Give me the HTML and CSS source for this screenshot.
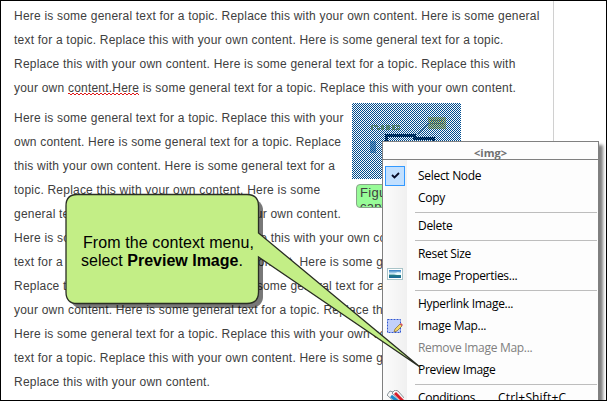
FILE: index.html
```
<!DOCTYPE html>
<html lang="en">
<head>
<meta charset="utf-8">
<title>Preview Image</title>
<link rel="stylesheet" href="styles.css">
</head>
<body>
<main class="frame">
  <article class="page">
    <p>Here is some general text for a topic. Replace this with your own content. Here is some general<br>
    text for a topic. Replace this with your own content. Here is some general text for a topic.<br>
    Replace this with your own content. Here is some general text for a topic. Replace this with<br>
    your own <span class="misspelled">content.Here</span> is some general text for a topic. Replace this with your own content.</p>
    <p>Here is some general text for a topic. Replace this with your<br>
    own content. Here is some general text for a topic. Replace<br>
    this with your own content. Here is some general text for a<br>
    topic. Replace this with your own content. Here is some<br>
    general text for a topic. Replace this with your own content.<br>
    Here is some general text for a topic. Replace this with your own content.<br>
    text for a topic. Replace this with your own content. Here is some general<br>
    Replace this with your own content. Here is some general text for a topic.<br>
    your own content. Here is some general text for a topic. Replace this with<br>
    Here is some general text for a topic. Replace this with your own content.<br>
    text for a topic. Replace this with your own content. Here is some general<br>
    Replace this with your own content.</p>
  </article>

  <figure class="figure">
    <svg class="picture" width="109" height="76" viewBox="0 0 109 76" shape-rendering="crispEdges">
      <rect width="109" height="76" fill="#f8fbfd"/>
      <path d="M19 22h2v5h-2zM22 22h4v2h-4zM25 25h3v2h-3zM29 22h3v5h-3zM34 22h4v5h-4zM40 22h3v5h-3zM44 22h4v2h-4zM44 25h4v2h-4z" fill="#a3b552"/>
      <path d="M76 14h18v12H76z" fill="#dcd36c"/>
      <path d="M78 17h13M78 20h13" stroke="#a49a40"/>
      <path d="M66 31L77 20" stroke="#7893a8" stroke-width="2" fill="none"/>
      <path d="M34 38V32H62V35H81V38" stroke="#001432" stroke-width="3" fill="none"/>
      <path d="M18 38h6v12h-6z" fill="#7ba6ce"/>
    </svg>
    <div class="selection"></div>
    <figcaption>Figure<br>caption</figcaption>
  </figure>

  <nav class="menu">
    <header>&lt;img&gt;</header>
    <ul>
      <li><span class="check"><svg width="18" height="18"><path d="M6 8l2.500 2.500L13 6" fill="none" stroke="#080c28" stroke-width="1.800"/></svg></span>Select Node</li>
      <li>Copy</li>
      <li class="rule"></li>
      <li>Delete</li>
      <li class="rule"></li>
      <li>Reset Size</li>
      <li><svg class="icon" width="17" height="16">
        <defs><linearGradient id="sky" x2="0" y2="1"><stop stop-color="#2878c0"/><stop offset=".5" stop-color="#dff5fb"/><stop offset=".65" stop-color="#237b82"/><stop offset="1" stop-color="#16669c"/></linearGradient></defs>
        <rect x=".5" y=".5" width="15" height="11" fill="#fff" stroke="#a9c4c8"/><rect x="2" y="2" width="12" height="8" fill="url(#sky)"/><path d="M7 6c3-2 5-2 7-1v2c-3 0-5 0-7-1z" fill="#e9fbff"/></svg>Image Properties...</li>
      <li class="rule"></li>
      <li>Hyperlink Image...</li>
      <li><svg class="icon" width="17" height="16"><rect x=".5" y="1.500" width="13" height="13" fill="#c2d0fa" stroke="#3156d0" stroke-dasharray="2 1"/><path d="M7 14l1-3 5-5 2 2-5 5z" fill="#f4d766" stroke="#85703e" stroke-width=".8"/><path d="M13 6l1-1 2 2-1 1z" fill="#de505a"/></svg>Image Map...</li>
      <li class="disabled">Remove Image Map...</li>
      <li>Preview Image</li>
      <li class="rule"></li>
      <li><svg class="icon" width="17" height="16"><g stroke="#8a9499"><path d="M0 5l3-4 3 1 10 9-4 5z" fill="#f7f7f7"/><path d="M5 3l3-3 3 1 7 8-3 5z" fill="#f7f7f7"/></g><path d="M4 6l6 5" stroke="#1988cf" stroke-width="3"/><path d="M8 3l8 8" stroke="#d51d29" stroke-width="3"/></svg>Conditions...<span class="key">Ctrl+Shift+C</span></li>
    </ul>
  </nav>

  <svg class="callout" width="607" height="401">
    <rect x="70" y="199" width="193" height="109" rx="11" fill="#000" fill-opacity=".53"/>
    <path d="M77 194.500H247Q258.500 194.500 258.500 206V233L420 367L258.500 257V292Q258.500 303.500 247 303.500H77Q66 303.500 66 292V206Q66 194.500 77 194.500Z" fill="#c3ee86" stroke="#292d23" stroke-width="1.300"/>
  </svg>
  <div class="callout-text"><span class="first">From the context menu,</span><span class="second">select <b>Preview Image</b>.</span></div>
</main>
</body>
</html>
```
FILE: styles.css
```
* { box-sizing: border-box; }
body { margin: 0; background: #fff; }
.frame {
  position: relative;
  width: 607px;
  height: 401px;
  overflow: hidden;
  border: 1px solid #000;
  font-family: "Liberation Sans", Arial, sans-serif;
}
.page {
  width: 553px;
  height: 399px;
  padding: 3px 0 0 13px;
  border-right: 1px solid #d0d0d0;
  color: #404040;
  font-size: 12px;
  line-height: 24px;
  letter-spacing: .21px;
  white-space: nowrap;
}
.page p { margin: 0 0 6px; }
.misspelled {
  background:
    linear-gradient(90deg, #e01818 50%, transparent 0) 0 12px / 4px 1px repeat-x,
    linear-gradient(90deg, transparent 50%, #e01818 0) 0 13px / 4px 1px repeat-x;
}
.figure { position: absolute; left: 351px; top: 102px; margin: 0; }
.picture { display: block; }
.selection {
  position: absolute;
  left: 0;
  top: 0;
  width: 109px;
  height: 76px;
  background: conic-gradient(#004b8d 25%, transparent 0 50%, #004b8d 0 75%, transparent 0) 0 0 / 2px 2px;
}
figcaption {
  width: 101px;
  height: 24px;
  margin: 5px 0 0 4px;
  padding: 1px 3px;
  border: 1px solid #8aa58a;
  border-radius: 4px;
  background: #98fb98;
  color: #404040;
  font-size: 13px;
  line-height: 14px;
  letter-spacing: .3px;
  overflow: hidden;
}
.menu {
  position: absolute;
  left: 381px;
  top: 140px;
  width: 217px;
  height: 280px;
  border: 1px solid #808080;
  background: #fdfdfd;
  box-shadow: 4px 4px 3px rgba(0, 0, 0, .5);
  color: #000;
  font: 12px/22px "Open Sans", sans-serif;
  letter-spacing: -.3px;
}
.menu header {
  height: 18px;
  border-bottom: 1px solid #808080;
  color: #707070;
  font-size: 11px;
  font-weight: bold;
  line-height: 21px;
  text-align: center;
  letter-spacing: 0;
}
.menu ul {
  height: 260px;
  margin: 0;
  padding: 5px 0 0;
  list-style: none;
  background: linear-gradient(90deg, #fcfcfc, #f0f0f0 24px, #fdfdfd 24px);
}
.menu li { position: relative; height: 22px; padding-left: 35px; white-space: nowrap; }
.menu .rule { height: 1px; margin: 3px 1px 2px 32px; padding: 0; background: #bdbdbd; }
.menu .disabled { color: #808080; }
.check {
  position: absolute;
  left: 2px;
  top: 1px;
  width: 20px;
  height: 20px;
  border: 1px solid #3399ff;
  background: #c2e0ff;
}
.check svg { display: block; }
.icon { position: absolute; left: 4px; top: 3px; }
.key { position: absolute; left: 115px; letter-spacing: .15px; }
.callout { position: absolute; left: -1px; top: -1px; }
.callout-text {
  position: absolute;
  left: 80px;
  top: 233px;
  display: flex;
  flex-direction: column;
  color: #000;
  font-size: 16px;
  line-height: 18px;
  white-space: nowrap;
}
.first { padding-left: 2px; letter-spacing: .1px; }
```
